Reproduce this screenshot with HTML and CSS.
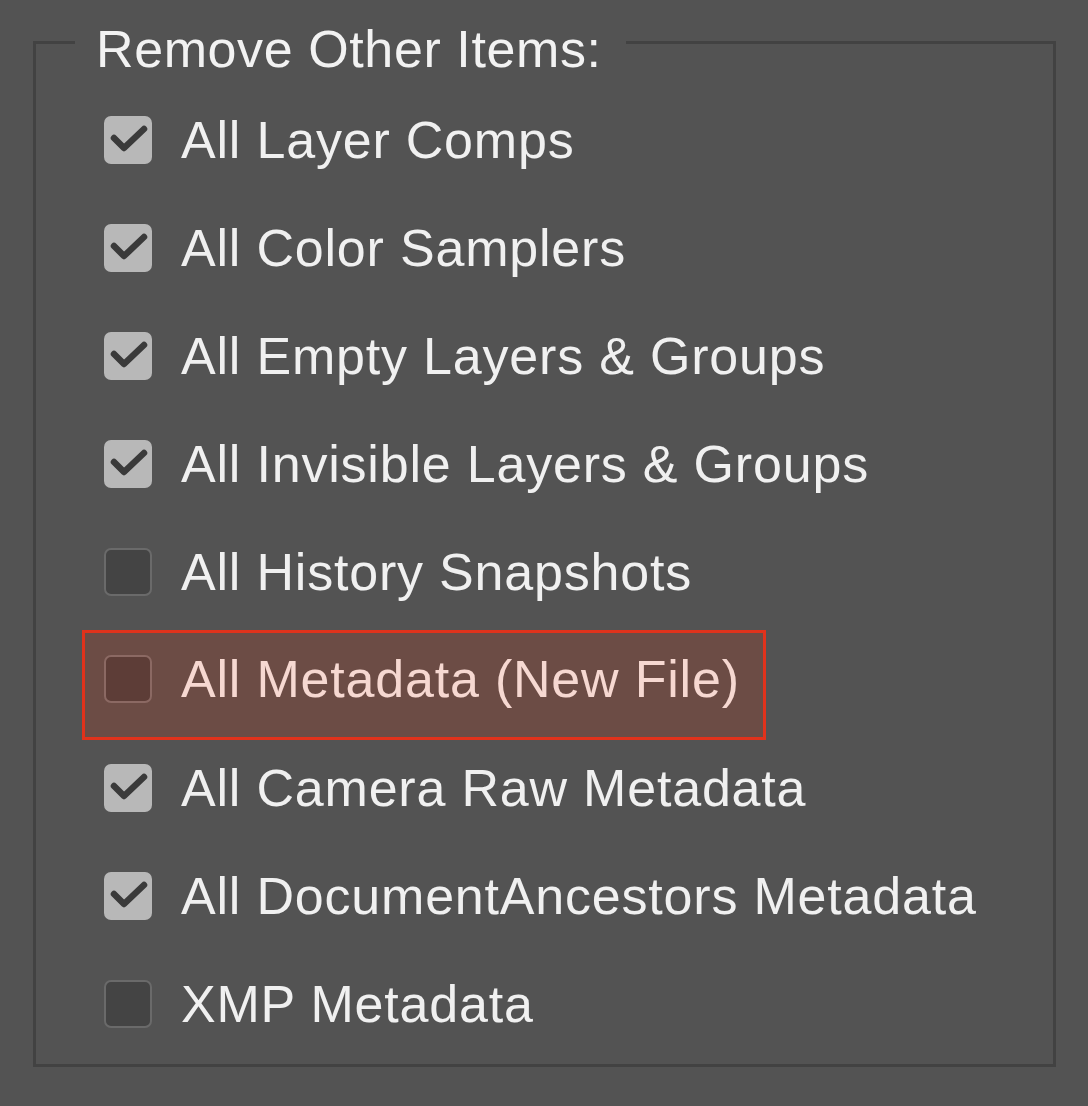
FILE: index.html
```html
<!DOCTYPE html>
<html lang="en">
<head>
<meta charset="utf-8">
<title>Remove Other Items</title>
<link rel="stylesheet" href="styles.css">
</head>
<body>
<fieldset class="group">
  <legend class="group-title">Remove Other Items:</legend>
  <div class="rows">
    <div class="row"><span class="box checked"><svg viewBox="0 0 48 48" class="tick"><path d="M10 22 L20 32 L40 13"/></svg></span><span class="label">All Layer Comps</span></div>
    <div class="row"><span class="box checked"><svg viewBox="0 0 48 48" class="tick"><path d="M10 22 L20 32 L40 13"/></svg></span><span class="label">All Color Samplers</span></div>
    <div class="row"><span class="box checked"><svg viewBox="0 0 48 48" class="tick"><path d="M10 22 L20 32 L40 13"/></svg></span><span class="label">All Empty Layers &amp; Groups</span></div>
    <div class="row"><span class="box checked"><svg viewBox="0 0 48 48" class="tick"><path d="M10 22 L20 32 L40 13"/></svg></span><span class="label">All Invisible Layers &amp; Groups</span></div>
    <div class="row"><span class="box"></span><span class="label">All History Snapshots</span></div>
    <div class="row row-highlight"><span class="box"></span><span class="label">All Metadata (New File)</span></div>
    <div class="row"><span class="box checked"><svg viewBox="0 0 48 48" class="tick"><path d="M10 22 L20 32 L40 13"/></svg></span><span class="label">All Camera Raw Metadata</span></div>
    <div class="row"><span class="box checked"><svg viewBox="0 0 48 48" class="tick"><path d="M10 22 L20 32 L40 13"/></svg></span><span class="label">All DocumentAncestors Metadata</span></div>
    <div class="row"><span class="box"></span><span class="label">XMP Metadata</span></div>
  </div>
</fieldset>
</body>
</html>
```
FILE: styles.css
```css
html, body {
  margin: 0;
  padding: 0;
  background: #535353;
}
body {
  font-family: "Liberation Sans", Arial, sans-serif;
  color: #f0f0f0;
  height: 1106px;
  overflow: hidden;
}
.group {
  margin: 5px 32px 0 33px;
  padding: 7px 0 6px 46px;
  border: 3px solid #424242;
  min-inline-size: 0;
}
.group-title {
  margin-left: -7px;
  padding: 14px 24px 0 21px;
  font-size: 52px;
  line-height: 60px;
  letter-spacing: 0.6px;
  color: #f2f2f2;
}
.rows {
  display: flex;
  flex-direction: column;
  align-items: flex-start;
}
.row {
  display: flex;
  align-items: center;
  height: 108px;
  box-sizing: border-box;
  padding-left: 22px;
}
.box {
  width: 48px;
  height: 48px;
  box-sizing: border-box;
  border-radius: 7px;
  background: #444444;
  border: 2px solid #6a6a6a;
  flex: none;
  display: flex;
}
.box.checked {
  background: #b8b8b8;
  border: none;
}
.tick {
  width: 48px;
  height: 48px;
}
.tick path {
  fill: none;
  stroke: #3a3a3a;
  stroke-width: 6.5;
  stroke-linecap: round;
  stroke-linejoin: round;
}
.label {
  margin-left: 29px;
  font-size: 52px;
  line-height: 60px;
  letter-spacing: 0.8px;
  white-space: nowrap;
}
.row-highlight {
  height: 110px;
  margin-top: 4px;
  margin-bottom: -6px;
  padding: 22px 23px 34px 19px;
  border: 3px solid #e2321b;
  background: #6c4c45;
  align-items: center;
}
.row-highlight .box {
  background: #5d3d37;
  border-color: #8b6963;
}
.row-highlight .label {
  color: #f6d8d1;
}
```
